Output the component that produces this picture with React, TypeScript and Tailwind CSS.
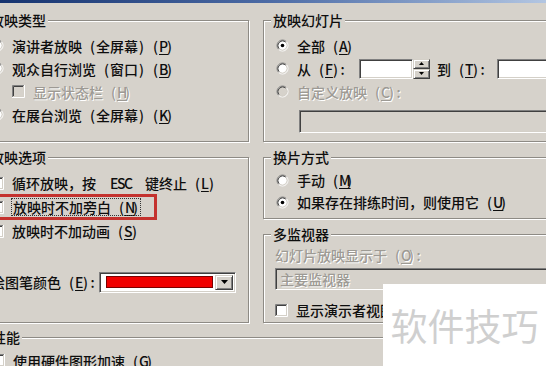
import type { ReactNode } from 'react'
import clsx from 'clsx'

const BG = 'bg-[#d6d2cb]'

const Radio = ({ checked, disabled }: { checked?: boolean; disabled?: boolean }) => (
  <svg width="13" height="13" viewBox="0 0 13 13" className="shrink-0">
    <circle cx="6.5" cy="6.5" r="4.5" fill={disabled ? '#d6d2cb' : '#fff'} />
    <path d="M2.61 10.39 A5.5 5.5 0 0 1 10.39 2.61" stroke="#808080" fill="none" />
    <path d="M10.39 2.61 A5.5 5.5 0 0 1 2.61 10.39" stroke="#fff" fill="none" />
    <path d="M3.32 9.68 A4.5 4.5 0 0 1 9.68 3.32" stroke="#404040" fill="none" />
    <path d="M9.68 3.32 A4.5 4.5 0 0 1 3.32 9.68" stroke="#d4d0c8" fill="none" />
    {checked && <circle cx="6.5" cy="6.5" r="1.8" fill="#000" />}
  </svg>
)

const Check = ({ disabled }: { disabled?: boolean }) => (
  <svg width="13" height="13" viewBox="0 0 13 13" className="shrink-0">
    <rect x="2" y="2" width="9" height="9" fill={disabled ? '#d6d2cb' : '#fff'} />
    <path d="M0.5 12 V0.5 H12" stroke="#808080" fill="none" />
    <path d="M1.5 11 V1.5 H11" stroke="#404040" fill="none" />
    <path d="M0 12.5 H12.5 V0" stroke="#fff" fill="none" />
    <path d="M1 11.5 H11.5 V1" stroke="#d4d0c8" fill="none" />
  </svg>
)

// latin chars sit in half-width cells, like the old dialog font
const Half = ({ c, u }: { c: string; u?: boolean }) => (
  <span className={clsx('inline-block w-[7px] text-center', u && 'underline underline-offset-2')}>
    {c === ' ' ? '\u00a0' : c}
  </span>
)

const Text = ({ s }: { s: string }) => (
  <>
    {s.split(/([\x20-\x7e]+)/).map((part, i) =>
      /^[\x20-\x7e]+$/.test(part) ? (
        part.split('').map((c, j) => <Half key={`${i}-${j}`} c={c} />)
      ) : (
        <span key={i}>{part}</span>
      )
    )}
  </>
)

// text with an underlined access key
const Label = ({ text, k, tail = '', disabled }: { text: string; k?: string; tail?: string; disabled?: boolean }) => (
  <span
    className={clsx(
      'whitespace-nowrap',
      disabled ? 'text-[#9d9a94] [text-shadow:1px_1px_0_#fff]' : 'text-[#0e0e0e]'
    )}
  >
    <Text s={text} />
    {k && (
      <>
        <Half c="(" />
        <Half c={k} u />
        <Half c=")" />
      </>
    )}
    <Text s={tail} />
  </span>
)

const Group = ({ title, className, children }: { title: string; className?: string; children: ReactNode }) => (
  <fieldset
    className={clsx(
      'min-w-0 border border-[#8e8b85] shadow-[inset_1px_1px_0_#fff,1px_1px_0_#fff]',
      className
    )}
  >
    <legend className={clsx('ml-[7px] px-[2px] leading-[16px] text-[#0e0e0e]', BG)}>{title}</legend>
    {children}
  </fieldset>
)

const Row = ({ h = 'h-[23px]', children, className }: { h?: string; children: ReactNode; className?: string }) => (
  <div className={clsx('flex items-center gap-[8px]', h, className)}>{children}</div>
)

const sunken =
  'border border-t-[#808080] border-l-[#808080] border-b-white border-r-white shadow-[inset_1px_1px_0_#404040,inset_-1px_-1px_0_#d4d0c8]'
const raised =
  'border border-t-[#d4d0c8] border-l-[#d4d0c8] border-b-[#404040] border-r-[#404040] shadow-[inset_1px_1px_0_#fff,inset_-1px_-1px_0_#808080]'

const Spinner = () => (
  <div className="flex w-[17px] flex-col">
    <div className={clsx('flex h-1/2 items-center justify-center', BG, raised)}>
      <svg width="5" height="3" viewBox="0 0 5 3">
        <path d="M2.5 0 L5 3 H0 Z" fill="#000" />
      </svg>
    </div>
    <div className={clsx('flex h-1/2 items-center justify-center', BG, raised)}>
      <svg width="5" height="3" viewBox="0 0 5 3">
        <path d="M0 0 H5 L2.5 3 Z" fill="#000" />
      </svg>
    </div>
  </div>
)

export default function App() {
  return (
    <div
      className={clsx(
        "relative h-[366px] w-[546px] overflow-hidden font-['Noto_Sans_CJK_SC',sans-serif] text-[14px] leading-[16px] font-medium",
        BG
      )}
    >
      <div className="h-[3px] bg-gradient-to-r from-[#16336f] via-[#4d6ca6] to-[#b3c6e2]" />

      <div className="-ml-[20px] mt-[9px] flex gap-[14px]">
        {/* left column */}
        <div className="flex w-[269px] shrink-0 flex-col gap-[7px]">
          <Group title="放映类型" className="h-[130px]">
            <div className="pl-[10px] pt-[6px]">
              <Row>
                <Radio checked />
                <Label text="演讲者放映 (全屏幕) " k="P" />
              </Row>
              <Row>
                <Radio />
                <Label text="观众自行浏览 (窗口) " k="B" />
              </Row>
              <Row className="pl-[21px]">
                <Check disabled />
                <Label text="显示状态栏 " k="H" disabled />
              </Row>
              <Row>
                <Radio />
                <Label text="在展台浏览 (全屏幕) " k="K" />
              </Row>
            </div>
          </Group>

          <Group title="放映选项" className="h-[174px]">
            <div className="pl-[10px] pt-[6px]">
              <Row h="h-[24px]">
                <Check />
                <Label text="循环放映，按  ESC  键终止 " k="L" />
              </Row>
              <Row h="h-[24px]" className="relative">
                <Check />
                <span className="px-[1px] outline-1 outline-offset-[0px] outline-dotted outline-[#333]">
                  <Label text="放映时不加旁白 " k="N" />
                </span>
                {/* red annotation box */}
                <span className="absolute -left-[10px] -top-[1px] h-[26px] w-[176px] border-[3px] border-[#c4322e]" />
              </Row>
              <Row h="h-[24px]">
                <Check />
                <Label text="放映时不加动画 " k="S" />
              </Row>
              <div className="mt-[28px] flex h-[22px] items-center gap-[3px]">
                <Label text="绘图笔颜色 " k="E" tail=":" />
                <div className={clsx('flex h-[21px] w-[137px] bg-white p-[2px]', sunken)}>
                  <div className="flex flex-1 items-center pl-[4px] pr-[2px]">
                    <div className="h-[12px] flex-1 border border-[#7a0000] bg-[#f00000]" />
                  </div>
                  <div className={clsx('flex w-[18px] items-center justify-center', BG, raised)}>
                    <svg width="7" height="4" viewBox="0 0 7 4">
                      <path d="M0 0 H7 L3.5 4 Z" fill="#000" />
                    </svg>
                  </div>
                </div>
              </div>
            </div>
          </Group>
        </div>

        {/* right column */}
        <div className="flex w-[320px] shrink-0 flex-col gap-[7px]">
          <Group title="放映幻灯片" className="h-[130px]">
            <div className="pl-[12px] pt-[6px]">
              <Row>
                <Radio checked />
                <Label text="全部 " k="A" />
              </Row>
              <Row>
                <Radio />
                <span className="w-[62px] shrink-0">
                  <Label text="从 " k="F" tail=":" />
                </span>
                <div className="-ml-[8px] flex h-[20px]">
                  <div className={clsx('w-[54px] bg-white', sunken)} />
                  <Spinner />
                </div>
                <span className="-ml-[1px] w-[60px] shrink-0">
                  <Label text="到 " k="T" tail=":" />
                </span>
                <div className={clsx('-ml-[8px] h-[20px] w-[90px] bg-white', sunken)} />
              </Row>
              <Row>
                <Radio disabled />
                <Label text="自定义放映 " k="C" tail=":" disabled />
              </Row>
              <div className={clsx('ml-[23px] mt-[7px] h-[23px]', sunken)} />
            </div>
          </Group>

          <Group title="换片方式" className="h-[70px]">
            <div className="pl-[12px] pt-[4px]">
              <Row h="h-[22px]">
                <Radio />
                <Label text="手动 " k="M" />
              </Row>
              <Row h="h-[22px]">
                <Radio checked />
                <Label text="如果存在排练时间，则使用它 " k="U" />
              </Row>
            </div>
          </Group>

          <Group title="多监视器" className="h-[97px]">
            <div className="pl-[11px] pt-[4px]">
              <div className="flex h-[18px] items-center">
                <Label text="幻灯片放映显示于 " k="O" tail=":" disabled />
              </div>
              <div className={clsx('mt-[4px] flex h-[22px] items-center pl-[4px]', sunken)}>
                <Label text="主要监视器" disabled />
              </div>
              <Row h="h-[20px]" className="mt-[10px]">
                <Check />
                <Label text="显示演示者视图 " k="W" />
              </Row>
            </div>
          </Group>
        </div>
      </div>

      <div className="-ml-[18px] mt-[6px]">
        <Group title="性能" className="h-[60px] w-[620px]">
          <div className="pl-[9px] pt-[4px]">
            <Row>
              <Check />
              <Label text="使用硬件图形加速 " k="G" />
            </Row>
          </div>
        </Group>
      </div>

      {/* watermark */}
      <div className="absolute bottom-0 right-0 flex h-[82px] w-[163px] items-center justify-center bg-white">
        <span className="text-[37px] font-normal leading-none text-[#cfcfcf]">软件技巧</span>
      </div>
    </div>
  )
}
